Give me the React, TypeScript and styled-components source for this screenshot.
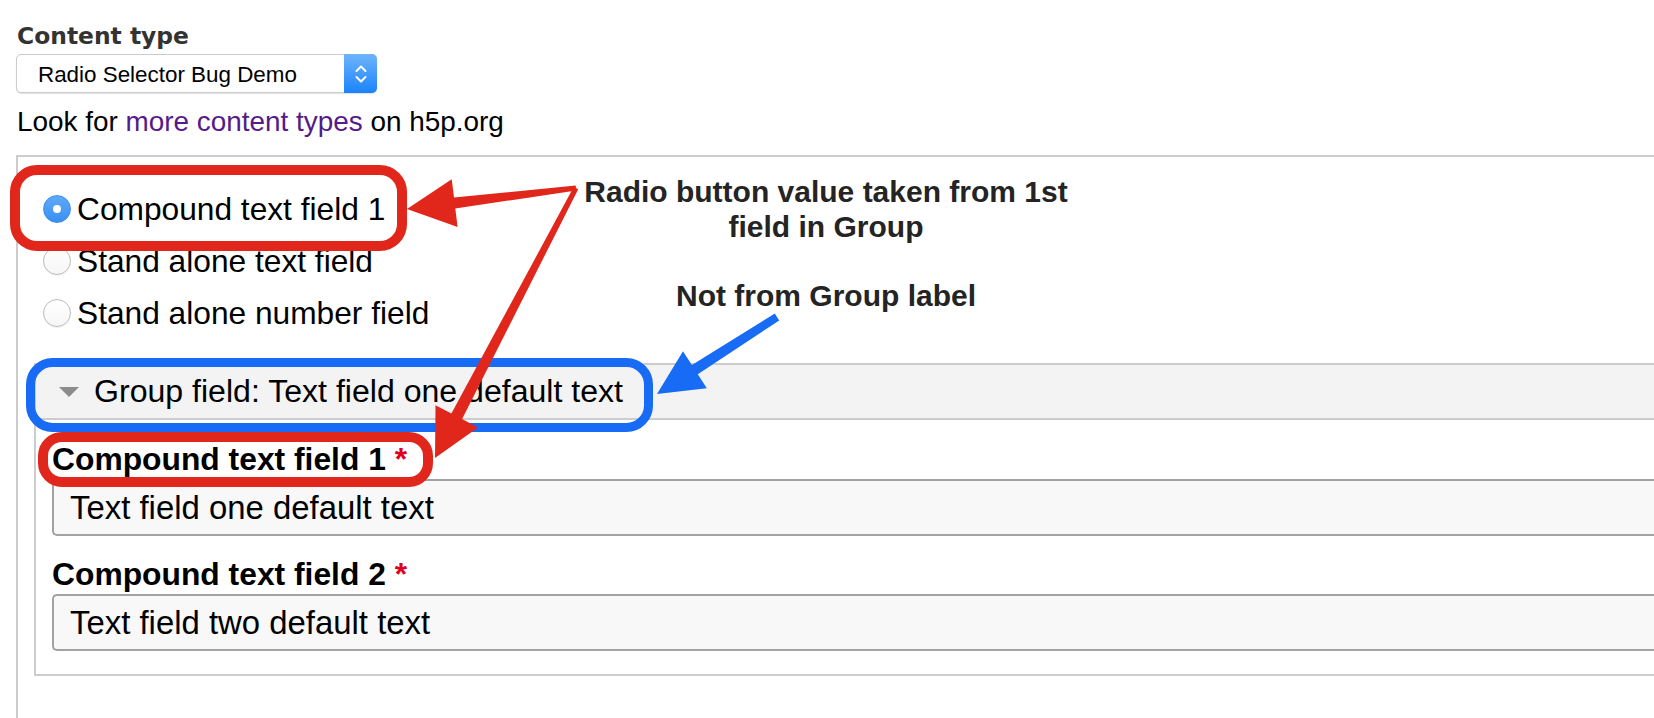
import React from "react";
import styled, { createGlobalStyle } from "styled-components";

const GlobalStyle = createGlobalStyle`
  html, body { margin: 0; padding: 0; background: #fff; overflow: hidden; }
  body { font-family: "Liberation Sans", Arial, sans-serif; color: #000; }
`;

const Page = styled.div`
  position: relative;
  width: 1654px;
  height: 718px;
  overflow: hidden;
  padding: 23px 0 0 16px;
  box-sizing: border-box;
`;

const Heading = styled.div`
  font-family: "DejaVu Sans", Verdana, sans-serif;
  font-weight: bold;
  font-size: 23.4px;
  line-height: 27px;
  color: #333;
  margin-left: 1px;
`;

const Select = styled.div`
  margin-top: 4px;
  width: 361px;
  height: 39px;
  box-sizing: border-box;
  border: 1px solid #cbcbcb;
  border-radius: 5px;
  display: flex;
  align-items: stretch;
  background: #fff;
  box-shadow: 0 1px 1px rgba(0, 0, 0, 0.12);
`;

const SelectText = styled.span`
  flex: 1;
  display: flex;
  align-items: center;
  padding: 2px 0 0 21px;
  font-size: 22.4px;
  color: #000;
`;

const SelectButton = styled.span`
  width: 33px;
  margin: -1px -1px -1px 0;
  border-radius: 0 5px 5px 0;
  background: linear-gradient(#6fb4fb, #1a83fb);
  display: flex;
  align-items: center;
  justify-content: center;
`;

const Hint = styled.div`
  margin-top: 13px;
  font-size: 27.9px;
  line-height: 32px;
  margin-left: 1px;
`;

const Link = styled.a`
  color: #551a8b;
  text-decoration: none;
`;

const Wrapper = styled.div`
  margin-top: 17px;
  margin-right: -40px;
  border: 2px solid #cccccc;
  border-right: none;
  padding: 26px 0 80px 16px;
`;

const RadioList = styled.div`
  display: flex;
  flex-direction: column;
  padding-left: 9px;
`;

const RadioRow = styled.label`
  height: 52px;
  display: flex;
  align-items: center;
  gap: 6px;
  font-size: 31.7px;
`;

const RadioDot = styled.span<{ $checked?: boolean }>`
  width: 28px;
  height: 28px;
  box-sizing: border-box;
  border-radius: 50%;
  display: flex;
  align-items: center;
  justify-content: center;
  flex: none;
  background: ${(p) => (p.$checked ? "linear-gradient(#5eaaf9, #3a8ff3)" : "linear-gradient(#ffffff, #f6f6f6)")};
  border: 1px solid ${(p) => (p.$checked ? "#3f8fe8" : "#bcbcbc")};
  box-shadow: ${(p) => (p.$checked ? "none" : "0 1px 1px rgba(0,0,0,0.06)")};
  &::after {
    content: "";
    display: ${(p) => (p.$checked ? "block" : "none")};
    width: 8px;
    height: 8px;
    border-radius: 50%;
    background: #fff;
  }
`;

const Group = styled.div`
  margin-top: 24px;
  border: 2px solid #cccccc;
  border-right: none;
`;

const GroupHeader = styled.div`
  height: 53px;
  background: #f3f3f3;
  border-bottom: 2px solid #cccccc;
  display: flex;
  align-items: center;
  gap: 15px;
  padding-left: 23px;
  font-size: 32.1px;
`;

const Caret = styled.span`
  width: 0;
  height: 0;
  border-left: 10px solid transparent;
  border-right: 10px solid transparent;
  border-top: 10px solid #8c8c8c;
  margin-top: 1px;
`;

const GroupBody = styled.div`
  padding: 21px 0 23px 16px;
  display: flex;
  flex-direction: column;
  gap: 20px;
`;

const Field = styled.div`
  display: flex;
  flex-direction: column;
`;

const FieldLabel = styled.div`
  font-size: 31.8px;
  font-weight: bold;
  line-height: 37px;
  margin-bottom: 1px;
`;

const Required = styled.span`
  color: #e0001b;
`;

const TextInput = styled.div`
  height: 57px;
  box-sizing: border-box;
  border: 2px solid #a2a2a2;
  border-right: none;
  border-radius: 5px 0 0 5px;
  background: #f8f8f8;
  padding-left: 16px;
  display: flex;
  align-items: center;
  font-size: 32.9px;
`;

const Overlay = styled.svg`
  position: absolute;
  left: 0;
  top: 0;
  width: 1654px;
  height: 718px;
  pointer-events: none;
`;

const Note = styled.div<{ $x: number; $y: number; $w: number }>`
  position: absolute;
  left: ${(p) => p.$x}px;
  top: ${(p) => p.$y}px;
  width: ${(p) => p.$w}px;
  text-align: center;
  font-family: "Liberation Sans", Arial, sans-serif;
  font-weight: bold;
  font-size: 30px;
  line-height: 35px;
  color: #242424;
  white-space: nowrap;
`;

type Pt = [number, number];

function arrowPoints(tail: Pt, tip: Pt, w0: number, w1: number, headLen: number, headHalf: number): string {
  const dx = tip[0] - tail[0];
  const dy = tip[1] - tail[1];
  const L = Math.hypot(dx, dy);
  const ux = dx / L;
  const uy = dy / L;
  const px = -uy;
  const py = ux;
  const bx = tip[0] - ux * headLen;
  const by = tip[1] - uy * headLen;
  const pts: Pt[] = [
    [tail[0] + (px * w0) / 2, tail[1] + (py * w0) / 2],
    [bx + (px * w1) / 2, by + (py * w1) / 2],
    [bx + px * headHalf, by + py * headHalf],
    tip,
    [bx - px * headHalf, by - py * headHalf],
    [bx - (px * w1) / 2, by - (py * w1) / 2],
    [tail[0] - (px * w0) / 2, tail[1] - (py * w0) / 2],
  ];
  return pts.map((p) => `${p[0].toFixed(1)},${p[1].toFixed(1)}`).join(" ");
}

const RED = "#e1271b";
const BLUE = "#176bf4";

const radios = [
  { label: "Compound text field 1", checked: true },
  { label: "Stand alone text field", checked: false },
  { label: "Stand alone number field", checked: false },
];

const fields = [
  { label: "Compound text field 1", value: "Text field one default text" },
  { label: "Compound text field 2", value: "Text field two default text" },
];

export default function App() {
  return (
    <>
      <GlobalStyle />
      <Page>
        <Heading>Content type</Heading>
        <Select>
          <SelectText>Radio Selector Bug Demo</SelectText>
          <SelectButton>
            <svg width="14" height="24" viewBox="0 0 14 24">
              <path d="M2.5 9 L7 4.5 L11.5 9" fill="none" stroke="#fff" strokeWidth="2" strokeLinecap="round" strokeLinejoin="round" />
              <path d="M2.5 15 L7 19.5 L11.5 15" fill="none" stroke="#fff" strokeWidth="2" strokeLinecap="round" strokeLinejoin="round" />
            </svg>
          </SelectButton>
        </Select>
        <Hint>
          Look for <Link href="#">more content types</Link> on h5p.org
        </Hint>
        <Wrapper>
          <RadioList>
            {radios.map((r) => (
              <RadioRow key={r.label}>
                <RadioDot $checked={r.checked} />
                {r.label}
              </RadioRow>
            ))}
          </RadioList>
          <Group>
            <GroupHeader>
              <Caret />
              Group field: Text field one default text
            </GroupHeader>
            <GroupBody>
              {fields.map((f) => (
                <Field key={f.label}>
                  <FieldLabel>
                    {f.label} <Required>*</Required>
                  </FieldLabel>
                  <TextInput>{f.value}</TextInput>
                </Field>
              ))}
            </GroupBody>
          </Group>
        </Wrapper>

        <Overlay viewBox="0 0 1654 718">
          <rect x="30.5" y="362.5" width="618" height="65" rx="22" fill="none" stroke={BLUE} strokeWidth="9" />
          <rect x="15" y="170" width="387" height="76" rx="22" fill="none" stroke={RED} strokeWidth="10" />
          <rect x="43" y="437" width="385" height="45" rx="19" fill="none" stroke={RED} strokeWidth="10" />
          <polygon points={arrowPoints([777, 317], [657, 394], 8, 11, 45, 22)} fill={BLUE} />
          <polygon points={arrowPoints([576, 188], [407, 209], 5, 11, 48, 24)} fill={RED} />
          <polygon points={arrowPoints([576, 188], [435, 458], 5, 12, 47, 24)} fill={RED} />
        </Overlay>
        <Note $x={526} $y={174} $w={600}>
          Radio button value taken from 1st
          <br />
          field in Group
        </Note>
        <Note $x={676} $y={278} $w={298}>
          Not from Group label
        </Note>
      </Page>
    </>
  );
}
